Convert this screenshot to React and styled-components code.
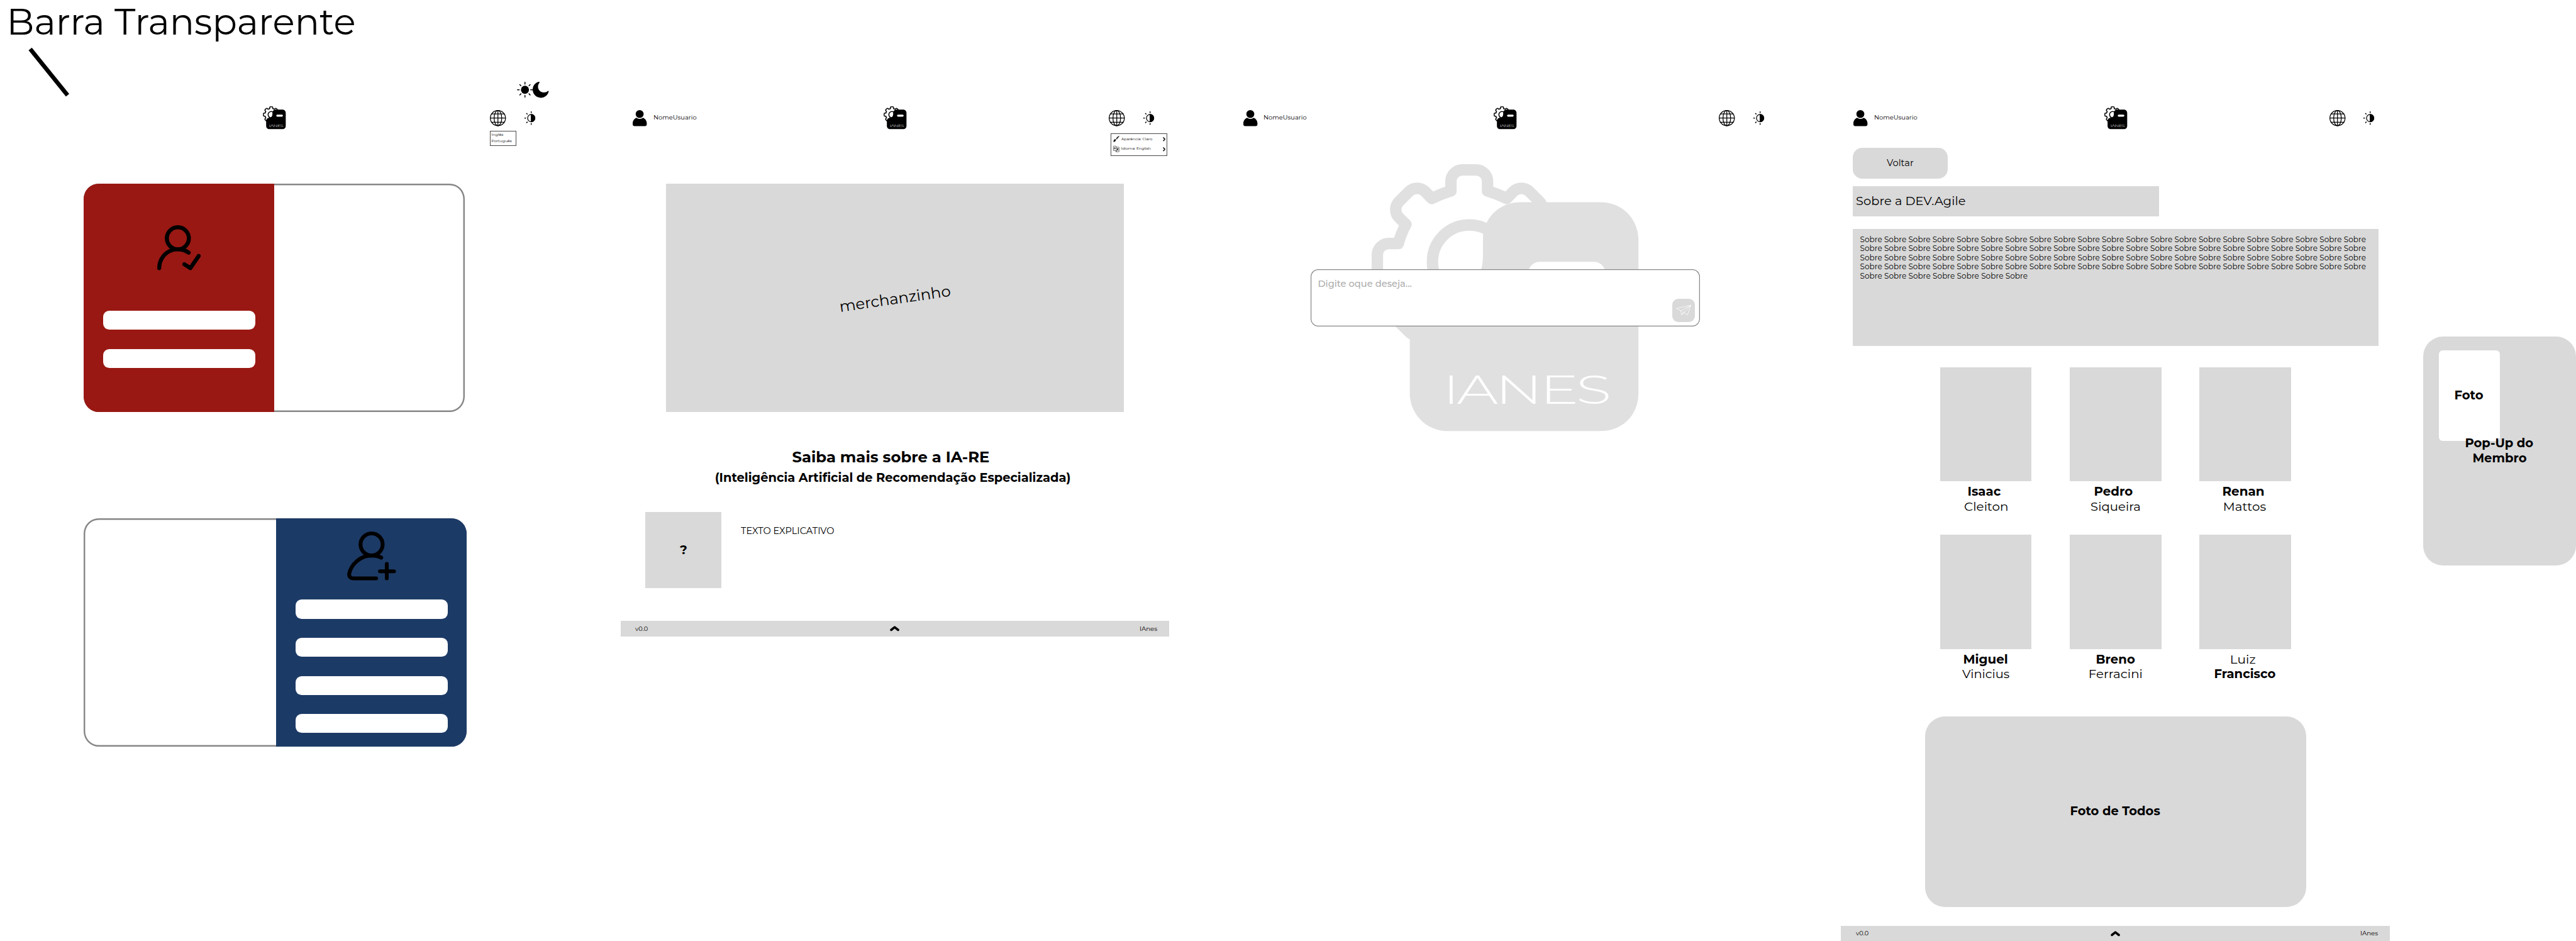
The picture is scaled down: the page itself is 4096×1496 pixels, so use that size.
import React from 'react';
import styled, { createGlobalStyle, css } from 'styled-components';

/* Design units to screen pixels. */
const RATIO = 4096 / 6758;
const u = (n) => `${(n * RATIO).toFixed(3)}px`;

const FONT = 'Montserrat, Inter, "Noto Sans", sans-serif';
const GRAY = '#d9d9d9';
const LINE = '#868686';

const GlobalStyle = createGlobalStyle`
  *, *::before, *::after { box-sizing: border-box; }
  html, body { margin: 0; padding: 0; background: #fff; }
  body { font-family: ${FONT}; color: #000; overflow: hidden; }
  svg { display: block; flex: none; }
`;

/* ---------- Text fitted to a given ink width ---------- */

const TextBox = styled.span`
  display: block;
  flex: none;
  width: ${(p) => u(p.$w)};
  height: ${(p) => u(p.$lh)};
  color: ${(p) => p.$color};
`;

const TextInk = styled.span`
  display: block;
  width: max-content;
  white-space: pre;
  transform-origin: 0 50%;
  font-family: ${FONT};
  font-size: ${(p) => u(p.$size)};
  font-weight: ${(p) => p.$weight};
  line-height: ${(p) => u(p.$lh)};
`;

const measure = (() => {
  let ctx;
  return (text, weight) => {
    if (!ctx) ctx = document.createElement('canvas').getContext('2d');
    ctx.font = `${weight} 200px ${FONT}`;
    const m = ctx.measureText(text);
    return {
      left: m.actualBoundingBoxLeft / 200,
      ink: (m.actualBoundingBoxLeft + m.actualBoundingBoxRight) / 200,
    };
  };
})();

function Text({ children, w, size, weight = 400, lh, color = 'inherit' }) {
  const line = lh || size * 1.219;
  const m = measure(children, weight);
  const scale = w / (m.ink * size);
  const shift = m.left * size * scale * RATIO;
  return (
    <TextBox $w={w} $lh={line} $color={color}>
      <TextInk
        $size={size}
        $weight={weight}
        $lh={line}
        style={{ transform: `translateX(${shift}px) scaleX(${scale})` }}
      >
        {children}
      </TextInk>
    </TextBox>
  );
}

/* ---------- Icons ---------- */

const Icon = styled.svg`
  width: ${(p) => u(p.$w)};
  height: ${(p) => u(p.$h || p.$w)};
  overflow: visible;
`;

const Stroked = styled(Icon)`
  fill: none;
  stroke: ${(p) => p.$stroke || '#000'};
  stroke-width: ${(p) => p.$sw};
  stroke-linecap: round;
  stroke-linejoin: round;
`;

const GEAR_QUARTER =
  'M256.5 15H238A30 30 0 0 0 208 45V70Q181 78 158 90L140.5 72A30 30 0 0 0 98 72L72 98A30 30 0 0 0 72 140.5L90 158Q77 182 70 208H45A30 30 0 0 0 15 238V256.5';

const LOGO_FONT = 107;
const LOGO_TRACKING = -5;

const LogoText = styled.text`
  font-family: ${FONT};
  font-size: ${LOGO_FONT}px;
  font-weight: 350;
  letter-spacing: ${LOGO_TRACKING}px;
  fill: #fff;
`;

function Logo({ size, color = '#000' }) {
  const m = measure('IANES', 350);
  const stretch = 417 / (m.ink * LOGO_FONT + 4 * LOGO_TRACKING);
  const start = 204.5 + m.left * LOGO_FONT * stretch;
  return (
    <Icon $w={size} viewBox="0 0 700 700">
      <g fill="none" stroke={color} strokeWidth="30" strokeLinejoin="round">
        {[[1, 1], [-1, 1], [1, -1], [-1, -1]].map(([x, y]) => (
          <path
            key={`${x}${y}`}
            d={GEAR_QUARTER}
            transform={`translate(${x < 0 ? 512 : 0} ${y < 0 ? 512 : 0}) scale(${x} ${y})`}
          />
        ))}
        <circle cx="256" cy="256" r="96.5" />
      </g>
      <path
        fill={color}
        d="M292 198C292 140 336 100 390 100H600C660 100 700 146 700 200V600C700 660 656 700 600 700H200C144 700 100 656 100 600V450C100 394 142 352 196 352C252 350 292 304 292 240Z"
      />
      <rect x="411" y="256" width="202" height="60" rx="30" fill="#fff" />
      <LogoText transform={`translate(${start} 628) scale(${stretch} 1)`}>IANES</LogoText>
    </Icon>
  );
}

const Globe = () => (
  <Stroked $w={42} $sw={2.1} viewBox="0 0 42 42">
    <circle cx="21" cy="21" r="19.9" />
    <ellipse cx="21" cy="21" rx="10" ry="19.9" />
    <path d="M21 1V41M1 21H41M4 10H38M4 32H38" />
  </Stroked>
);

const Contrast = () => (
  <Stroked $w={42} $sw={2.1} viewBox="0 0 42 42">
    <circle cx="21" cy="21" r="9.6" />
    <path d="M21 11.4A9.6 9.6 0 0 1 21 30.6Z" fill="#000" />
    <path strokeWidth="2.6" d="M21 4.4V6.4M21 35.6V37.6M4.2 21H6.2M9 9L10.4 10.4M9 33L10.4 31.6" />
  </Stroked>
);

const Sun = () => (
  <Stroked $w={42} $sw={2.5} viewBox="0 0 42 42">
    <circle cx="21" cy="21" r="10.6" fill="#000" stroke="none" />
    <path d="M21 1.4V6M21 36V40.6M1.4 21H6M36 21H40.6M7.4 7.4L10.4 10.4M34.6 7.4L31.6 10.4M7.4 34.6L10.4 31.6M34.6 34.6L31.6 31.6" />
  </Stroked>
);

const Moon = () => (
  <Icon $w={42} viewBox="0 0 42 42">
    <path d="M16.6 0.2C7 2 0 10.6 0 20.8C0 32.5 9.5 42 21.2 42C31.5 42 40 35 41.9 25.6C42.2 24.2 40.9 23.6 39.8 24.4C37 26.8 33.4 28 29.4 28C20.6 28 14 21.3 14 12.8C14 8.8 15.4 5.2 17.7 2.3C18.5 1.1 17.9 0 16.6 0.2Z" />
  </Icon>
);

const Person = () => (
  <Icon $w={37} $h={42} viewBox="0 0 37 42">
    <circle cx="18.3" cy="10.4" r="10.4" />
    <path d="M10 20.2C4 22.5 0 28 0 35V37.5C0 40 2 42 4.5 42H32.5C35 42 37 40 37 37.5V35C37 28 33 22.5 27 20.2C22.5 24.2 14.5 24.2 10 20.2Z" />
  </Icon>
);

const UserCheck = () => (
  <Stroked $w={114} $h={118} $sw={10.6} viewBox="413 591.5 114 118">
    <circle cx="467.1" cy="625.9" r="28.9" />
    <path d="M418.4 704A48.7 48.7 0 0 1 495.4 663.5" />
    <path d="M484.2 694L500 704L521.7 672.3" />
  </Stroked>
);

const UserPlus = () => (
  <Stroked $w={128} $h={128} $sw={10.1} viewBox="911 1395 128 128">
    <circle cx="975.1" cy="1429" r="29" />
    <path d="M1000.5 1463.5C993 1459.8 984 1458 975.5 1458C945 1458 921 1482 916.3 1506C915.5 1513 920 1518 927 1518H987" />
    <path d="M1015 1480V1518M997 1499.3H1034" />
  </Stroked>
);

const Plane = () => (
  <Stroked $w={40} $h={27} $sw={1.2} $stroke="#fff" viewBox="10 16.5 40 27">
    <path d="M49 17L10.8 25.3L22 31.2ZM22 31.2L25 42.3L49 17M30 37L25 42.3M27 33.8L40 42.5L49 17" />
  </Stroked>
);

const Translate = () => (
  <Stroked $w={16} $sw={0.9} viewBox="0 0 16 16">
    <path d="M8.5 12.4H1.2Q0.5 12.4 0.5 11.7V1.2Q0.5 0.5 1.2 0.5H7Q7.5 0.5 7.7 1L9.8 12.2L7.6 15.2L6.9 12.4M8.3 3.2H14.8Q15.5 3.2 15.5 3.9V14.7Q15.5 15.4 14.8 15.4H7.7" />
    <path strokeWidth="1.1" d="M2.8 8.3L4.2 3.4L5.7 8.3M3.2 6.7H5.3M9.8 7.4H13.6M11.7 6.4V7.4M13 7.6Q12.2 10.3 10 11.8M10.5 8.8Q11.5 11 13.4 11.9" />
  </Stroked>
);

const Brush = () => (
  <Icon $w={16} viewBox="0 0 16 16">
    <path d="M15.8 0.2C14.3 0 9.2 4.800 7.900 7L9.500 8.600C11.500 7.200 16.200 1.600 15.800 0.200Z" />
    <path d="M7.300 7.900L8.700 9.300L7.500 10.400L5.900 8.900Z" />
    <path d="M5 9.200C7 9.800 7.300 12 6 13.800C4.600 15.800 2 16 0 15.800C1.300 14.800 1 13.500 1.600 11.500C2.100 9.900 3.500 8.900 5 9.200Z" />
  </Icon>
);

const ChevronRight = () => (
  <Stroked $w={7} $h={11} $sw={2.5} viewBox="0 0 7 11">
    <path d="M1.7 1.5L5.4 5.5L1.7 9.5" />
  </Stroked>
);

const ChevronUp = () => (
  <Stroked $w={25} $h={14} $sw={6} viewBox="0 0 25 14">
    <path d="M3.3 10.7L12.5 3.4L21.7 10.7" />
  </Stroked>
);

/* ---------- Board ---------- */

const Board = styled.main`
  display: flex;
  align-items: flex-start;
  width: 4096px;
  height: 1496px;
  overflow: hidden;
`;

const Column = styled.section`
  display: flex;
  flex-direction: column;
  flex: none;
  width: ${u(1440)};
  height: ${(p) => (p.$h ? u(p.$h) : 'auto')};
  margin-top: ${(p) => u(p.$top ?? 269)};
  margin-right: ${(p) => u(p.$after)};
`;

const Notes = styled.div`
  display: flex;
  justify-content: space-between;
  align-items: flex-start;
  height: ${u(269)};
`;

const Callout = styled.div`
  display: flex;
  flex-direction: column;
  padding-left: ${u(28.7)};
`;

const CalloutLine = styled(Stroked)`
  margin: ${u(7)} 0 0 ${u(46.3)};
  stroke-linecap: butt;
`;

const ThemePair = styled.div`
  display: flex;
  padding-top: ${u(215)};
`;

/* ---------- Top bar and footer ---------- */

const Bar = styled.header`
  position: relative;
  display: grid;
  grid-template-columns: 1fr auto 1fr;
  align-items: center;
  flex: none;
  height: ${u(80)};
`;

const User = styled.div`
  display: flex;
  align-items: center;
  gap: ${u(18.5)};
  padding-left: ${u(32.6)};
`;

const Actions = styled.div`
  display: flex;
  justify-content: flex-end;
  gap: ${u(44.7)};
  padding-right: ${(p) => u(p.$end)};
`;

const popover = css`
  position: absolute;
  left: ${u(1285)};
  display: flex;
  flex-direction: column;
  background: #fff;
  border: 1px solid #4a4a4a;
`;

const LanguageMenu = styled.div`
  ${popover}
  top: ${u(74)};
  width: ${u(70)};
  height: ${u(40)};
  justify-content: center;
  gap: ${u(4.1)};
  padding-left: ${u(3.8)};
`;

const SettingsMenu = styled.div`
  ${popover}
  top: ${u(80)};
  width: ${u(150)};
  height: ${u(60)};
  gap: ${u(10)};
  padding: ${u(6.4)} ${u(4.2)} 0 ${u(6.4)};
`;

const SettingsRow = styled.div`
  display: grid;
  grid-template-columns: ${u(21.2)} 1fr auto;
  align-items: center;
  height: ${u(16)};
`;

function TopBar({ user, end = 30.3, children }) {
  return (
    <Bar>
      <User>
        {user && (
          <>
            <Person />
            <Text w={111} size={16}>{user}</Text>
          </>
        )}
      </User>
      <Logo size={60} />
      <Actions $end={end}>
        <Globe />
        <Contrast />
      </Actions>
      {children}
    </Bar>
  );
}

const FooterBar = styled.footer`
  display: grid;
  grid-template-columns: 1fr auto 1fr;
  align-items: center;
  flex: none;
  height: ${u(40)};
  margin-top: auto;
  padding: 0 ${u(32.5)} 0 ${u(38.3)};
  background: ${GRAY};
`;

const FooterEnd = styled.div`
  display: flex;
  justify-content: flex-end;
`;

const FooterMark = styled.div`
  margin-right: ${u(6)};
`;

const Footer = () => (
  <FooterBar>
    <Text w={32.5} size={16}>v0.0</Text>
    <FooterMark><ChevronUp /></FooterMark>
    <FooterEnd><Text w={44.5} size={16}>IAnes</Text></FooterEnd>
  </FooterBar>
);

/* ---------- Sign in / sign up ---------- */

const AuthStack = styled.div`
  display: flex;
  flex-direction: column;
  gap: ${u(278)};
  padding: ${u(132)} 0 0 ${u(220)};
`;

const AuthCard = styled.div`
  display: flex;
  justify-content: ${(p) => (p.$flip ? 'flex-end' : 'flex-start')};
  width: ${(p) => u(p.$flip ? 1005 : 1000)};
  height: ${u(600)};
  border-radius: ${u(40)};
  box-shadow: inset 0 0 0 ${u(4)} ${LINE};
`;

const AuthSide = styled.div`
  display: flex;
  flex-direction: column;
  align-items: center;
  width: ${u(500)};
  padding-top: ${(p) => u(p.$pad)};
  background: ${(p) => p.$color};
  border-radius: ${(p) => (p.$flip ? `0 ${u(40)} ${u(40)} 0` : `${u(40)} 0 0 ${u(40)}`)};
`;

const Fields = styled.div`
  display: flex;
  flex-direction: column;
  gap: ${u(50)};
  margin-top: ${(p) => u(p.$top)};
`;

const Field = styled.div`
  width: ${u(400)};
  height: ${u(50)};
  border-radius: ${u(16)};
  background: #fff;
`;

/* ---------- Home ---------- */

const Banner = styled.div`
  display: flex;
  align-items: center;
  justify-content: center;
  align-self: center;
  width: ${u(1200)};
  height: ${u(600)};
  margin-top: ${u(132)};
  background: ${GRAY};
`;

const Tilt = styled.div`
  transform: rotate(-8.2deg) translateY(${u(2)});
`;

const Headings = styled.div`
  display: flex;
  flex-direction: column;
  align-items: center;
  gap: ${u(10.2)};
  margin: ${u(94.3)} ${u(9.5)} 0 0;
`;

const Nudge = styled.div`
  padding-right: ${(p) => u(p.$by)};
`;

const Explain = styled.div`
  display: flex;
  gap: ${u(50.4)};
  margin: ${u(69.7)} 0 0 ${u(65)};
`;

const Square = styled.div`
  display: flex;
  align-items: center;
  justify-content: center;
  width: ${u(200)};
  height: ${u(200)};
  background: ${GRAY};
`;

const ExplainText = styled.div`
  padding-top: ${u(36.7)};
`;

/* ---------- Chat ---------- */

const ChatArea = styled.div`
  display: grid;
  place-items: center;
  height: ${u(864)};
  > * { grid-area: 1 / 1; }
`;

const Prompt = styled.div`
  display: flex;
  justify-content: space-between;
  width: ${u(1020)};
  height: ${u(150)};
  padding: ${u(25)} ${u(12)} ${u(12)} ${u(21.3)};
  box-shadow: inset 0 0 0 ${u(2)} ${LINE};
  border-radius: ${u(20)};
  background: #fff;
  z-index: 1;
`;

const Send = styled.button`
  display: flex;
  align-items: center;
  justify-content: center;
  align-self: flex-end;
  width: ${u(60)};
  height: ${u(60)};
  padding: 0;
  border: 0;
  border-radius: ${u(16)};
  background: ${GRAY};
`;

/* ---------- About ---------- */

const About = styled.div`
  display: flex;
  flex-direction: column;
  padding: ${u(39)} ${u(30)} 0;
`;

const Back = styled.div`
  display: flex;
  align-items: center;
  justify-content: center;
  width: ${u(250)};
  height: ${u(80)};
  border-radius: ${u(25)};
  background: ${GRAY};
`;

const TitleBar = styled.div`
  display: flex;
  align-items: center;
  width: ${u(804)};
  height: ${u(80)};
  margin-top: ${u(20)};
  padding-left: ${u(10.8)};
  background: ${GRAY};
`;

const Paragraph = styled.div`
  height: ${u(307)};
  margin-top: ${u(32)};
  padding: ${u(16.5)} 0 0 ${u(21.3)};
  background: ${GRAY};
`;

const Members = styled.div`
  display: grid;
  grid-template-columns: repeat(3, ${u(240)});
  grid-auto-rows: ${u(440)};
  column-gap: ${u(100)};
  justify-content: center;
  margin-top: ${u(56)};
`;

const Member = styled.div`
  display: flex;
  flex-direction: column;
  align-items: center;
`;

const Photo = styled.div`
  width: ${u(240)};
  height: ${u(300)};
  margin-bottom: ${u(7.3)};
  background: ${GRAY};
`;

const GroupPhoto = styled.div`
  display: flex;
  align-items: center;
  justify-content: center;
  align-self: center;
  width: ${u(1000)};
  height: ${u(500)};
  margin-top: ${u(36)};
  border-radius: ${u(52)};
  background: ${GRAY};
`;

const Popup = styled.aside`
  position: relative;
  display: flex;
  flex-direction: column;
  align-items: center;
  justify-content: center;
  flex: none;
  width: ${u(400)};
  height: ${u(600)};
  margin-top: ${u(883)};
  border-radius: ${u(52)};
  background: ${GRAY};
`;

const PopupPhoto = styled.div`
  position: absolute;
  left: ${u(41)};
  top: ${u(36)};
  display: flex;
  align-items: center;
  justify-content: center;
  width: ${u(159)};
  height: ${u(238)};
  border-radius: ${u(10)};
  background: #fff;
`;

const PopupLabel = styled.div`
  position: relative;
  display: flex;
  flex-direction: column;
  align-items: center;
`;

const MEMBERS = [
  { first: 'Isaac', fw: 84.3, last: 'Cleiton', lw: 112, nudge: 8.8 },
  { first: 'Pedro', fw: 98.5, last: 'Siqueira', lw: 127.5, nudge: 8.8 },
  { first: 'Renan', fw: 106.3, last: 'Mattos', lw: 108.3, nudge: 8.8 },
  { first: 'Miguel', fw: 113, last: 'Vinicius', lw: 123.5, nudge: 0 },
  { first: 'Breno', fw: 99.5, last: 'Ferracini', lw: 136, nudge: 0 },
  { first: 'Luiz', fw: 62.5, last: 'Francisco', lw: 158, nudge: 8.8, boldLast: true },
];

const sobre = (n) => Array(n).fill('Sobre').join(' ');
const PARAGRAPH = [[21, 1327], [21, 1327], [21, 1327], [21, 1327], [7, 438.5]];

export default function App() {
  return (
    <>
      <GlobalStyle />
      <Board>
        <Column $top={0} $after={188}>
          <Notes>
            <Callout>
              <Text w={901} size={96}>Barra Transparente</Text>
              <CalloutLine $w={108} $h={130} $sw={11} viewBox="75 124 108 130">
                <path d="M80 128.7L178 250" />
              </CalloutLine>
            </Callout>
            <ThemePair>
              <Sun />
              <Moon />
            </ThemePair>
          </Notes>
          <TopBar end={26}>
            <LanguageMenu>
              <Text w={30} size={10}>Inglês</Text>
              <Text w={52.3} size={10}>Português</Text>
            </LanguageMenu>
          </TopBar>
          <AuthStack>
            <AuthCard>
              <AuthSide $color="#991813" $pad={110.5}>
                <UserCheck />
                <Fields $top={105.5}>
                  <Field />
                  <Field />
                </Fields>
              </AuthSide>
            </AuthCard>
            <AuthCard $flip>
              <AuthSide $flip $color="#1c3a66" $pad={36}>
                <UserPlus />
                <Fields $top={50}>
                  <Field />
                  <Field />
                  <Field />
                  <Field />
                </Fields>
              </AuthSide>
            </AuthCard>
          </AuthStack>
        </Column>

        <Column $h={1400} $after={161}>
          <TopBar user="NomeUsuario">
            <SettingsMenu>
              <SettingsRow>
                <Brush />
                <Text w={81} size={10}>Aparência: Claro</Text>
                <ChevronRight />
              </SettingsRow>
              <SettingsRow>
                <Translate />
                <Text w={76.7} size={10}>Idioma: English</Text>
                <ChevronRight />
              </SettingsRow>
            </SettingsMenu>
          </TopBar>
          <Banner>
            <Tilt><Text w={289} size={40}>merchanzinho</Text></Tilt>
          </Banner>
          <Headings>
            <Nudge $by={12}>
              <Text w={515.5} size={40} weight={700}>Saiba mais sobre a IA-RE</Text>
            </Nudge>
            <Text w={930} size={32} weight={700}>
              (Inteligência Artificial de Recomendação Especializada)
            </Text>
          </Headings>
          <Explain>
            <Square><Text w={18} size={32} weight={700}>?</Text></Square>
            <ExplainText><Text w={244} size={24}>TEXTO EXPLICATIVO</Text></ExplainText>
          </Explain>
          <Footer />
        </Column>

        <Column $after={161}>
          <TopBar user="NomeUsuario" />
          <ChatArea>
            <Logo size={700} color="#e0e0e0" />
            <Prompt>
              <Text w={243} size={24} weight={500} color="#adadad">Digite oque deseja...</Text>
              <Send><Plane /></Send>
            </Prompt>
          </ChatArea>
        </Column>

        <Column $h={2200} $after={88}>
          <TopBar user="NomeUsuario" />
          <About>
            <Back><Text w={70} size={24}>Voltar</Text></Back>
            <TitleBar><Text w={285} size={32}>Sobre a DEV.Agile</Text></TitleBar>
            <Paragraph>
              {PARAGRAPH.map(([words, width], i) => (
                <Text key={i} w={width} size={20} lh={24}>{sobre(words)}</Text>
              ))}
            </Paragraph>
            <Members>
              {MEMBERS.map((m) => (
                <Member key={m.first}>
                  <Photo />
                  <Nudge $by={m.nudge}>
                    <Text w={m.fw} size={32} weight={m.boldLast ? 400 : 700}>{m.first}</Text>
                  </Nudge>
                  <Text w={m.lw} size={32} weight={m.boldLast ? 700 : 400}>{m.last}</Text>
                </Member>
              ))}
            </Members>
            <GroupPhoto>
              <Text w={233.5} size={32} weight={700}>Foto de Todos</Text>
            </GroupPhoto>
          </About>
          <Footer />
        </Column>

        <Popup>
          <PopupPhoto><Text w={72.7} size={32} weight={700}>Foto</Text></PopupPhoto>
          <PopupLabel>
            <Text w={176} size={32} weight={700}>Pop-Up do</Text>
            <Text w={138.7} size={32} weight={700}>Membro</Text>
          </PopupLabel>
        </Popup>
      </Board>
    </>
  );
}
